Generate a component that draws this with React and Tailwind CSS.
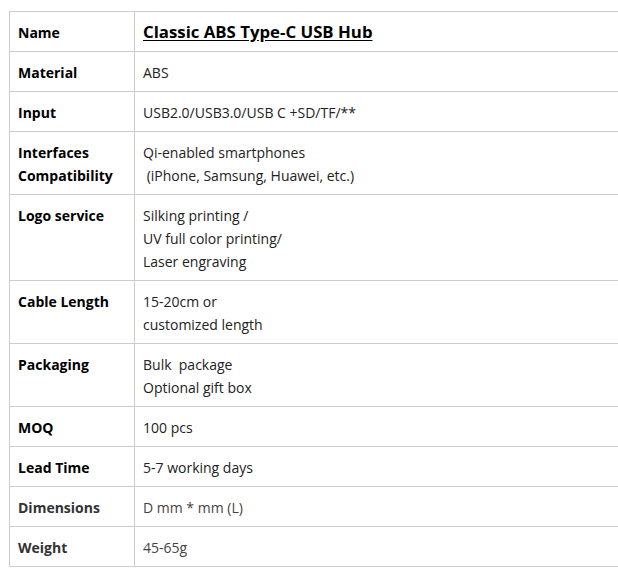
import React from 'react';

const rows = [
  { label: 'Name', value: ['Classic ABS Type-C USB Hub'], title: true },
  { label: 'Material', value: ['ABS'] },
  { label: 'Input', value: ['USB2.0/USB3.0/USB C +SD/TF/**'] },
  { label: ['Interfaces', 'Compatibility'], value: ['Qi-enabled smartphones', '\u00a0(iPhone, Samsung, Huawei, etc.)'] },
  { label: 'Logo service', value: ['Silking printing /', 'UV full color printing/', 'Laser engraving'] },
  { label: 'Cable Length', value: ['15-20cm or', 'customized length'] },
  { label: 'Packaging', value: ['Bulk \u00a0package', 'Optional gift box'] },
  { label: 'MOQ', value: ['100 pcs'] },
  { label: 'Lead Time', value: ['5-7 working days'] },
  { label: 'Dimensions', value: ['D mm * mm (L)'], muted: true },
  { label: 'Weight', value: ['45-65g'], muted: true },
];

export default function App() {
  return (
    <div className="w-full overflow-hidden bg-white pl-[9px] pt-[11px]" style={{ fontFamily: '"Open Sans", "Noto Sans", sans-serif' }}>
      <table className="w-[640px] border-collapse text-[14px] leading-[23px]">
        <tbody>
          {rows.map((r, i) => (
            <tr key={i}>
              <td className={`w-[125px] border border-[#cccccc] px-2 pt-[9px] pb-[7px] align-top font-bold ${r.muted ? 'text-[#333]' : 'text-black'}`}>
                {Array.isArray(r.label) ? r.label.map((l) => <div key={l}>{l}</div>) : r.label}
              </td>
              <td className={`border border-[#cccccc] px-2 pt-[9px] pb-[7px] align-top ${r.muted ? 'text-[#444]' : 'text-[#222]'}`}>
                {r.title ? (
                  <div className="text-[16.8px] font-bold leading-[22px] text-black underline underline-offset-2">{r.value[0]}</div>
                ) : (
                  r.value.map((v) => <div key={v} className="whitespace-pre">{v}</div>)
                )}
              </td>
            </tr>
          ))}
        </tbody>
      </table>
    </div>
  );
}
